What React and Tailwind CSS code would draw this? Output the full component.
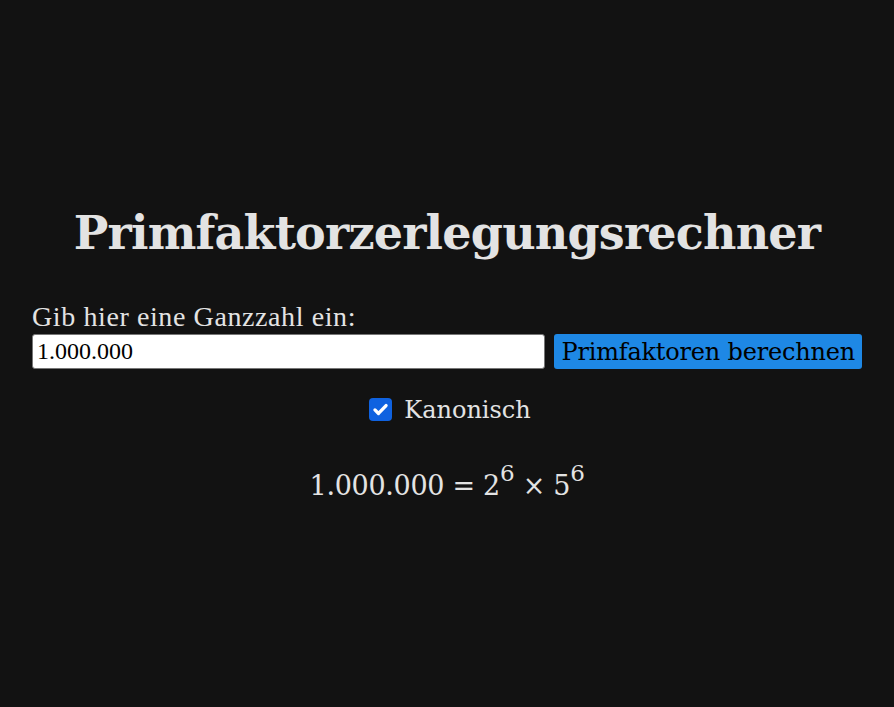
import React, { useState } from 'react';

export default function App() {
    const [value, setValue] = useState('1.000.000');
    const [canonical, setCanonical] = useState(true);

    return (
        <div className="min-h-screen w-full bg-[#121212] text-[#e3e3e3] flex flex-col justify-center px-8 pt-[9px] font-['DejaVu_Serif',serif]">
            <h1 className="text-center text-[46px] font-bold leading-none tracking-[-0.8px] mb-[46px]">
                Primfaktorzerlegungsrechner
            </h1>

            <label className="block font-['Liberation_Serif',serif] text-[28px] tracking-[0.6px] leading-[30px] mb-[2px]">
                Gib hier eine Ganzzahl ein:
            </label>
            <div className="flex gap-[9px] items-stretch">
                <input
                    type="text"
                    value={value}
                    onChange={(e) => setValue(e.target.value)}
                    className="flex-1 h-[35px] bg-white text-black rounded-[3px] border border-[#767676] px-1 font-['Liberation_Serif',serif] text-[24px] outline-none"
                />
                <button className="h-[35px] px-[7px] bg-[#1e88e5] text-black rounded-[3px] text-[24px] tracking-[-0.2px] whitespace-nowrap">
                    Primfaktoren berechnen
                </button>
            </div>

            <div className="flex justify-center items-center gap-3 mt-[23px] pl-[6px]">
                <button
                    onClick={() => setCanonical(!canonical)}
                    className="w-[23px] h-[23px] rounded-[4px] bg-[#0f62e0] flex items-center justify-center"
                >
                    {canonical && (
                        <svg viewBox="0 0 24 24" className="w-[19px] h-[19px]" fill="none" stroke="white" strokeWidth="4.2" strokeLinecap="round" strokeLinejoin="round">
                            <path d="M5 12.5l4.5 4.5L19 7" />
                        </svg>
                    )}
                </button>
                <span className="text-[24px]">Kanonisch</span>
            </div>

            <p className="text-center text-[27px] mt-[38px] tracking-[-0.3px]">
                1.000.000 = 2<sup className="text-[23px] -top-[0.6em]">6</sup> × 5<sup className="text-[23px] -top-[0.6em]">6</sup>
            </p>
        </div>
    );
}
